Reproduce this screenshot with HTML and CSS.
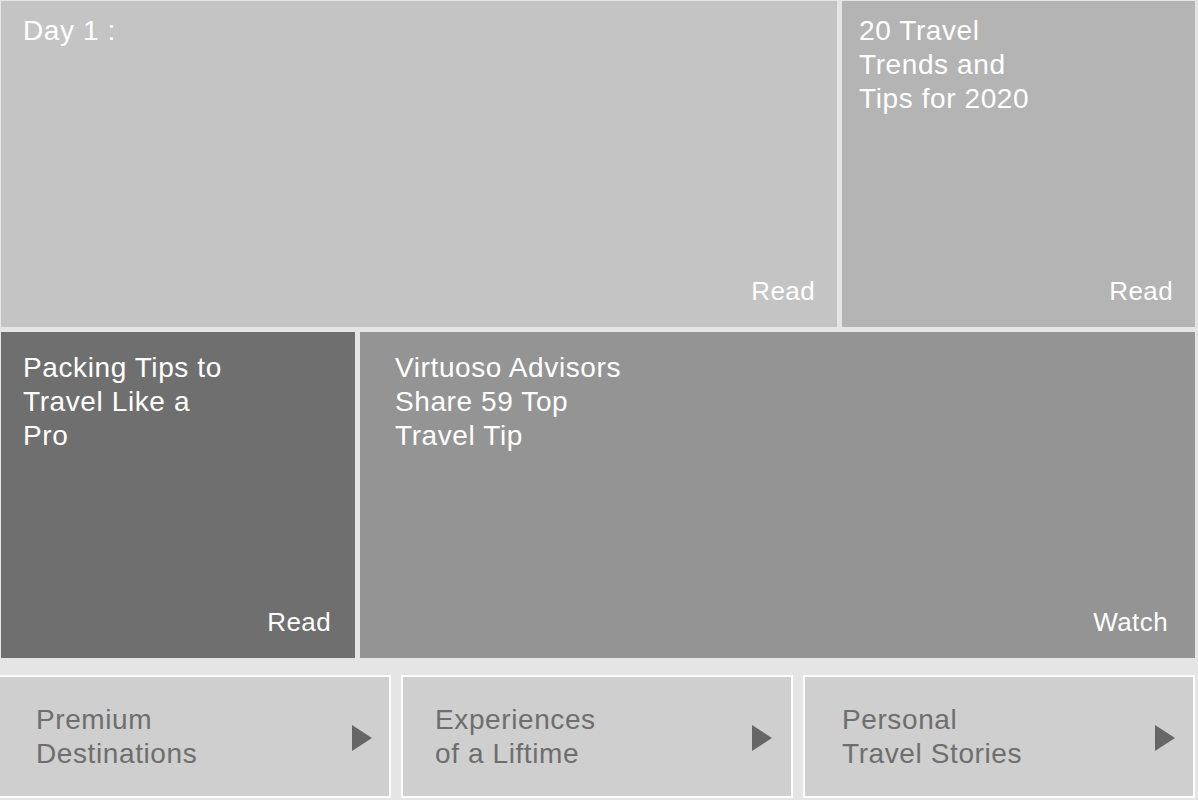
FILE: index.html
```html
<!DOCTYPE html>
<html>
<head>
  <title>Travel Tips</title>
  <link rel="stylesheet" href="styles.css">
</head>
<body>
  <div class="board">
    <!-- Featured stories -->
    <div class="row">
      <div class="tile tile-wide tile-light">
        <h2 class="tile-title">Day 1 :</h2>
        <span class="tile-link">Read</span>
      </div>
      <div class="tile tile-narrow tile-mid">
        <h2 class="tile-title">20 Travel<br>Trends and<br>Tips for 2020</h2>
        <span class="tile-link">Read</span>
      </div>
    </div>
    <div class="row row-second">
      <div class="tile tile-small tile-dark">
        <h2 class="tile-title">Packing Tips to<br>Travel Like a<br>Pro</h2>
        <span class="tile-link">Read</span>
      </div>
      <div class="tile tile-grow tile-grey">
        <h2 class="tile-title">Virtuoso Advisors<br>Share 59 Top<br>Travel Tip</h2>
        <span class="tile-link">Watch</span>
      </div>
    </div>

    <!-- Categories -->
    <div class="categories">
      <a class="category cat-1" href="#">
        <span class="category-name">Premium<br>Destinations</span>
        <span class="arrow"></span>
      </a>
      <a class="category cat-2" href="#">
        <span class="category-name">Experiences<br>of a Liftime</span>
        <span class="arrow"></span>
      </a>
      <a class="category cat-3" href="#">
        <span class="category-name">Personal<br>Travel Stories</span>
        <span class="arrow"></span>
      </a>
    </div>
  </div>
</body>
</html>
```

FILE: styles.css
```css
html, body { margin: 0; padding: 0; }
body {
  background-color: #e5e5e5;
  font-family: "Liberation Sans", Arial, sans-serif;
  overflow: hidden;
}

.board { padding: 1px 3px 0 1px; }

/* --- Story tiles --- */
.row { display: flex; gap: 5px; height: 326px; }
.row-second { margin-top: 5px; }

.tile {
  display: flex;
  flex-direction: column;
  justify-content: space-between;
  box-sizing: border-box;
  padding: 13px 22px 21px 22px;
  color: #ffffff;
}
.tile-wide { width: 836px; }
.tile-narrow { flex: 1; padding-left: 17px; }
.tile-small { width: 354px; padding-top: 19px; padding-right: 24px; }
.tile-grow { flex: 1; padding-top: 19px; padding-left: 35px; padding-right: 27px; }

.tile-light { background-color: #c4c4c4; }
.tile-mid { background-color: #b4b4b4; }
.tile-dark { background-color: #6f6f6f; }
.tile-grey { background-color: #949494; }

.tile-title {
  margin: 0;
  font-size: 28px;
  font-weight: normal;
  line-height: 34px;
  letter-spacing: 0.6px;
}
.tile-link {
  align-self: flex-end;
  font-size: 26px;
  line-height: 30px;
  letter-spacing: 0.4px;
}

/* --- Category buttons --- */
.categories {
  display: flex;
  gap: 10px;
  margin: 17px 0 0 -3px;
}
.category {
  display: flex;
  align-items: center;
  justify-content: space-between;
  box-sizing: border-box;
  width: 392px;
  height: 123px;
  border: 2px solid #ffffff;
  background-color: #cfcfcf;
  color: #6e6e6e;
  text-decoration: none;
  padding: 0 17px 0 36px;
}
.cat-1 { width: 393px; }
.cat-2 { padding-left: 32px; padding-right: 19px; }
.cat-3 { padding-left: 37px; padding-right: 18px; }
.category-name {
  font-size: 28px;
  line-height: 34px;
  letter-spacing: 0.6px;
}
.arrow {
  width: 0; height: 0;
  border-top: 13px solid transparent;
  border-bottom: 13px solid transparent;
  border-left: 20px solid #666666;
  margin-top: 3px;
}
```
